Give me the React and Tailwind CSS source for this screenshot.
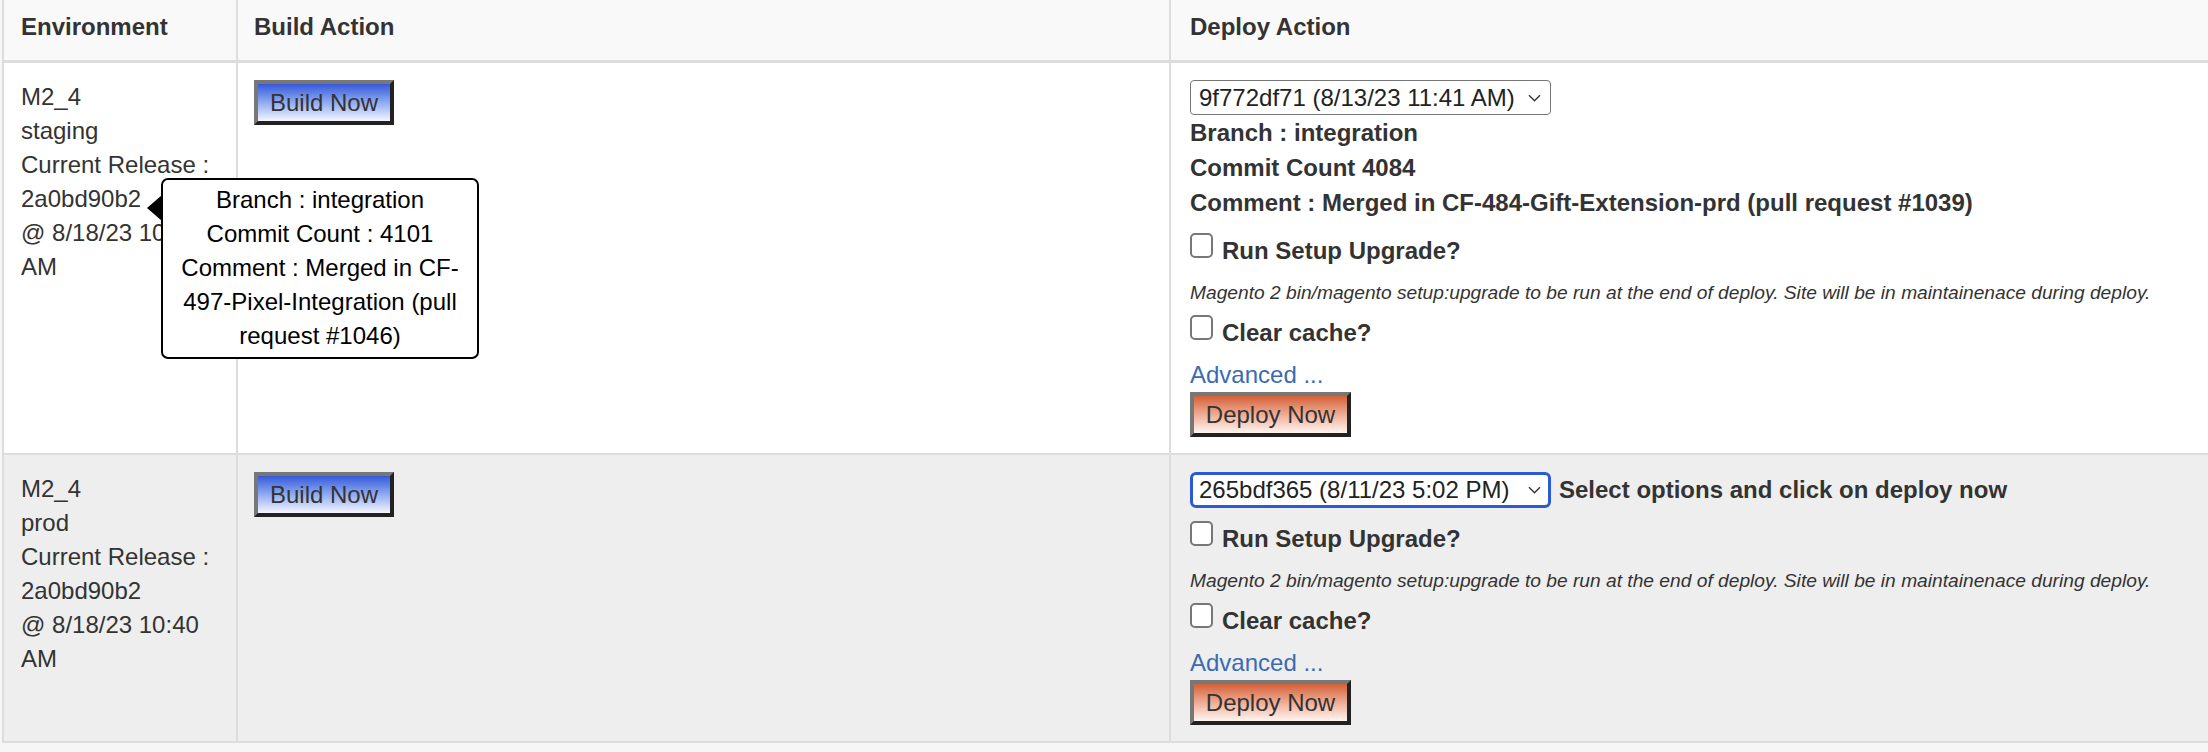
import React from "react";

const rows = [
  {
    env: ["M2_4", "staging", "Current Release :", "2a0bd90b2", "@ 8/18/23 10:40", "AM"],
    commit: "9f772df71 (8/13/23 11:41 AM)",
    focused: false,
    details: [
      "Branch : integration",
      "Commit Count 4084",
      "Comment : Merged in CF-484-Gift-Extension-prd (pull request #1039)",
    ],
    bg: "bg-white",
  },
  {
    env: ["M2_4", "prod", "Current Release :", "2a0bd90b2", "@ 8/18/23 10:40", "AM"],
    commit: "265bdf365 (8/11/23 5:02 PM)",
    focused: true,
    details: [],
    bg: "bg-[#eeeeee]",
  },
];

const Chevron = () => (
  <svg
    className="pointer-events-none absolute right-[10px] top-1/2 -translate-y-1/2"
    width="13"
    height="8"
    viewBox="0 0 13 8"
    fill="none"
  >
    <path d="M1 1.2l5.5 5.5L12 1.2" stroke="#333" strokeWidth="1.4" />
  </svg>
);

const CommitSelect = ({ value, focused }) => (
  <div className="relative w-[361px] shrink-0">
    <select
      defaultValue={value}
      className={
        focused
          ? "block h-[36px] w-full appearance-none rounded-[6px] border-[3px] border-[#2a5bd4] bg-white pl-[6px] text-[24px] leading-[28px] text-[#222] outline-none"
          : "block h-[35px] w-full appearance-none rounded-[4px] border border-[#767676] bg-white pl-[8px] text-[24px] leading-[28px] text-[#222] outline-none"
      }
    >
      <option>{value}</option>
    </select>
    <Chevron />
  </div>
);

const Check = ({ label }) => (
  <label className="flex items-start">
    <input
      type="checkbox"
      className="mt-[-1px] h-[25px] w-[23px] shrink-0 appearance-none rounded-[5px] border-2 border-[#777] bg-white"
    />
    <span className="ml-[9px] font-bold leading-[34px]">{label}</span>
  </label>
);

const Button = ({ children, tone }) => (
  <button
    className={
      "block h-[45px] border-4 border-t-[#777] border-l-[#777] border-r-[#222] border-b-[#222] bg-linear-to-b text-[24px] leading-[30px] text-[#333] " +
      (tone === "blue"
        ? "w-[140px] from-[#3758d9] to-[#f5f6ff]"
        : "w-[161px] from-[#d35f35] to-[#fff5f1]")
    }
  >
    {children}
  </button>
);

const DeployCell = ({ row }) => (
  <div className={`flex flex-col border-b-2 border-[#dddddd] pb-[16px] pl-[19px] pt-[17px] ${row.bg}`}>
    <div className="flex items-center">
      <CommitSelect value={row.commit} focused={row.focused} />
      {row.focused && (
        <span className="ml-[8px] font-bold leading-[34px]">Select options and click on deploy now</span>
      )}
    </div>
    {row.details.length > 0 && (
      <div className="font-bold leading-[35px]">
        {row.details.map((d) => (
          <div key={d}>{d}</div>
        ))}
      </div>
    )}
    <div className="mt-[14px]">
      <Check label="Run Setup Upgrade?" />
    </div>
    <p className="mt-[13px] text-[19.2px] italic leading-[24px]">
      Magento 2 bin/magento setup:upgrade to be run at the end of deploy. Site will be in maintainenace during deploy.
    </p>
    <div className="mt-[11px]">
      <Check label="Clear cache?" />
    </div>
    <a href="#" className="mt-[8px] w-fit leading-[34px] text-[#3a6bb1]">
      Advanced ...
    </a>
    <div>
      <Button tone="orange">Deploy Now</Button>
    </div>
  </div>
);

export default function App() {
  return (
    <div className="min-h-screen bg-[#f6f6f6] font-['Liberation_Sans',Arial,sans-serif] text-[24px] text-[#333]">
      <div className="relative pl-[2px]">
        <span className="absolute left-[-3px] top-[-13px] text-[16px] leading-[16px] text-[#555]">om</span>

        <div className="grid grid-cols-[234px_933px_1fr] border-l-2 border-[#dddddd]">
          {/* Header */}
          <div className="h-[63px] border-b-[3px] border-r-2 border-[#dddddd] bg-[#f9f9f9] pl-[17px] pt-[10px] font-bold leading-[34px]">
            Environment
          </div>
          <div className="h-[63px] border-b-[3px] border-r-2 border-[#dddddd] bg-[#f9f9f9] pl-[16px] pt-[10px] font-bold leading-[34px]">
            Build Action
          </div>
          <div className="h-[63px] border-b-[3px] border-[#dddddd] bg-[#f9f9f9] pl-[19px] pt-[10px] font-bold leading-[34px]">
            Deploy Action
          </div>

          {/* Rows */}
          {rows.map((row, i) => (
            <React.Fragment key={i}>
              <div className={`border-b-2 border-r-2 border-[#dddddd] pl-[17px] pt-[17px] leading-[34px] ${row.bg}`}>
                {row.env.map((line) => (
                  <div key={line}>{line}</div>
                ))}
              </div>
              <div className={`border-b-2 border-r-2 border-[#dddddd] pl-[16px] pt-[17px] ${row.bg}`}>
                <Button tone="blue">Build Now</Button>
              </div>
              <DeployCell row={row} />
            </React.Fragment>
          ))}
        </div>

        {/* Tooltip over the release hash */}
        <div className="absolute left-[147px] top-[195px] z-10 h-0 w-0 border-y-[13px] border-r-[15px] border-y-transparent border-r-black" />
        <div className="absolute left-[161px] top-[178px] z-10 h-[181px] w-[318px] rounded-[7px] border-2 border-black bg-white pt-[3px] text-center leading-[34px] text-black">
          Branch : integration
          <br />
          Commit Count : 4101
          <br />
          Comment : Merged in CF-
          <br />
          497-Pixel-Integration (pull
          <br />
          request #1046)
        </div>
      </div>
    </div>
  );
}
